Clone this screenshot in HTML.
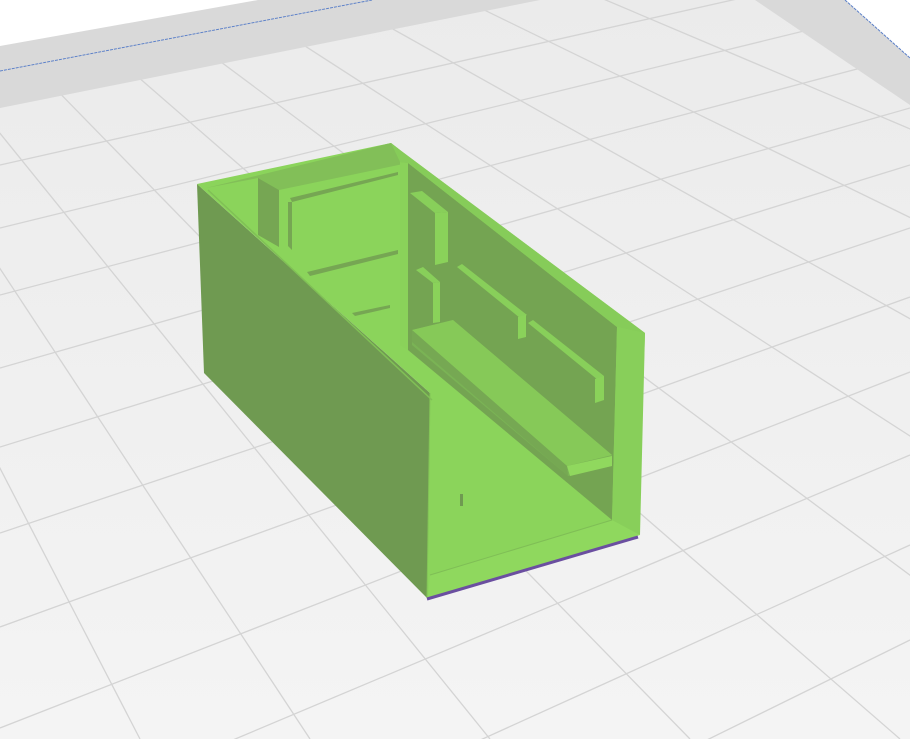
<!DOCTYPE html>
<html><head><meta charset="utf-8"><style>
html,body{margin:0;padding:0;width:910px;height:739px;overflow:hidden;background:#efefef}
svg{display:block}
</style></head><body>
<svg width="910" height="739" viewBox="0 0 910 739" xmlns="http://www.w3.org/2000/svg">
<defs><linearGradient id="bg" x1="0" y1="0" x2="0" y2="1"><stop offset="0" stop-color="#ebebeb"/><stop offset="1" stop-color="#f4f4f4"/></linearGradient></defs>
<rect width="910" height="739" fill="url(#bg)"/>
<g stroke="#d4d4d4" stroke-width="1.3" fill="none">
<line x1="0" y1="165" x2="910" y2="-40"/>
<line x1="0" y1="228" x2="910" y2="5"/>
<line x1="0" y1="295" x2="910" y2="55"/>
<line x1="0" y1="368" x2="910" y2="108"/>
<line x1="0" y1="447" x2="910" y2="165"/>
<line x1="0" y1="533" x2="910" y2="228"/>
<line x1="0" y1="627" x2="910" y2="297"/>
<line x1="0" y1="728" x2="910" y2="372"/>
<line x1="0" y1="838" x2="910" y2="455"/>
<line x1="0" y1="958" x2="910" y2="545"/>
<line x1="0" y1="1088" x2="910" y2="640"/>
</g>
<g stroke="#d4d4d4" stroke-width="1.3" fill="none">
<line x1="-480" y1="-460" x2="-170" y2="739"/>
<line x1="-480" y1="-460" x2="-20" y2="739"/>
<line x1="-480" y1="-460" x2="140" y2="739"/>
<line x1="-480" y1="-460" x2="310" y2="739"/>
<line x1="-480" y1="-460" x2="490" y2="739"/>
<line x1="-480" y1="-460" x2="690" y2="739"/>
<line x1="-480" y1="-460" x2="900" y2="739"/>
<line x1="-480" y1="-460" x2="1130" y2="739"/>
<line x1="-480" y1="-460" x2="1380" y2="739"/>
<line x1="-480" y1="-460" x2="1660" y2="739"/>
<line x1="-480" y1="-460" x2="1980" y2="739"/>
<line x1="-480" y1="-460" x2="2350" y2="739"/>
</g>
<polygon points="0,0 540,0 0,108" fill="#d9d9d9"/>
<polygon points="0,0 258,0 0,46" fill="#ffffff"/>
<line x1="0" y1="71" x2="372" y2="0" stroke="#5a7fc8" stroke-width="1" stroke-dasharray="3,1"/>
<polygon points="755,0 910,0 910,105" fill="#d9d9d9"/>
<polygon points="845,0 910,0 910,58" fill="#ffffff"/>
<line x1="845" y1="0" x2="910" y2="58" stroke="#5a7fc8" stroke-width="1" stroke-dasharray="3,1"/>

<polygon points="197,184 430,393 427,598 204,373" fill="#6f9a51"/>
<polygon points="197,184 391,143 400,150 645,333 638,535 427,598 430,393" fill="#8bd45b"/>
<polygon points="206,188 391,143 400,150 408,163 279,190 258,178" fill="#82bf58"/>
<polygon points="258,178 279,190 279,247 258,235" fill="#76a653"/>
<polygon points="290,198 398,172 398,175 292,202" fill="#76a653"/>
<polygon points="288,202 292,202 292,250 288,246" fill="#76a653"/>
<polygon points="307,272 398,250 398,254 310,276" fill="#76a653"/>
<polygon points="352,313 390,305 390,308 355,316" fill="#76a653"/>
<polygon points="408,163 617,327 612,520 408,350" fill="#74a452"/>
<polygon points="400,162 408,163 408,350 400,345" fill="#8ad25a"/>
<polygon points="391,143 400,150 645,333 617,327 408,163 400,162" fill="#86cc59"/>
<polygon points="617,327 645,333 640,535 612,522" fill="#88cf5a"/>
<polygon points="410,193 422,191 448,212 435,213" fill="#88cf5a"/>
<polygon points="435,213 448,212 448,262 435,265" fill="#8ad25a"/>
<polygon points="416,270 423,267 440,282 433,283" fill="#88cf5a"/>
<polygon points="433,283 440,282 440,322 433,323" fill="#8ad25a"/>
<polygon points="457,267 462,264 527,315 520,318" fill="#88cf5a"/>
<polygon points="518,317 526,315 526,337 518,339" fill="#8ad25a"/>
<polygon points="528,323 533,320 604,376 598,380" fill="#88cf5a"/>
<polygon points="595,379 604,376 604,400 595,403" fill="#8ad25a"/>
<polygon points="412,330 453,320 612,455 612,466 568,476 412,345" fill="#7ab355"/>
<polygon points="412,330 453,320 612,455 567,466" fill="#86c958"/>
<polygon points="412,330 567,466 568,476 412,342" fill="#76a853"/>
<polygon points="567,466 612,456 612,466 570,476" fill="#90d85e"/>
<line x1="208" y1="190" x2="432" y2="400" stroke="#80c056" stroke-width="1.5"/>
<rect x="460" y="494" width="3" height="12" fill="#6f9a51"/>
<polygon points="430,575 612,520 640,535 428,598" fill="#8fd85e"/>
<line x1="430" y1="575" x2="612" y2="520" stroke="#7fbe56" stroke-width="1"/>
<line x1="430" y1="393" x2="427" y2="598" stroke="#82c357" stroke-width="1"/>
<line x1="427" y1="599" x2="638" y2="537" stroke="#6b4fa0" stroke-width="3"/>
</svg>
</body></html>
